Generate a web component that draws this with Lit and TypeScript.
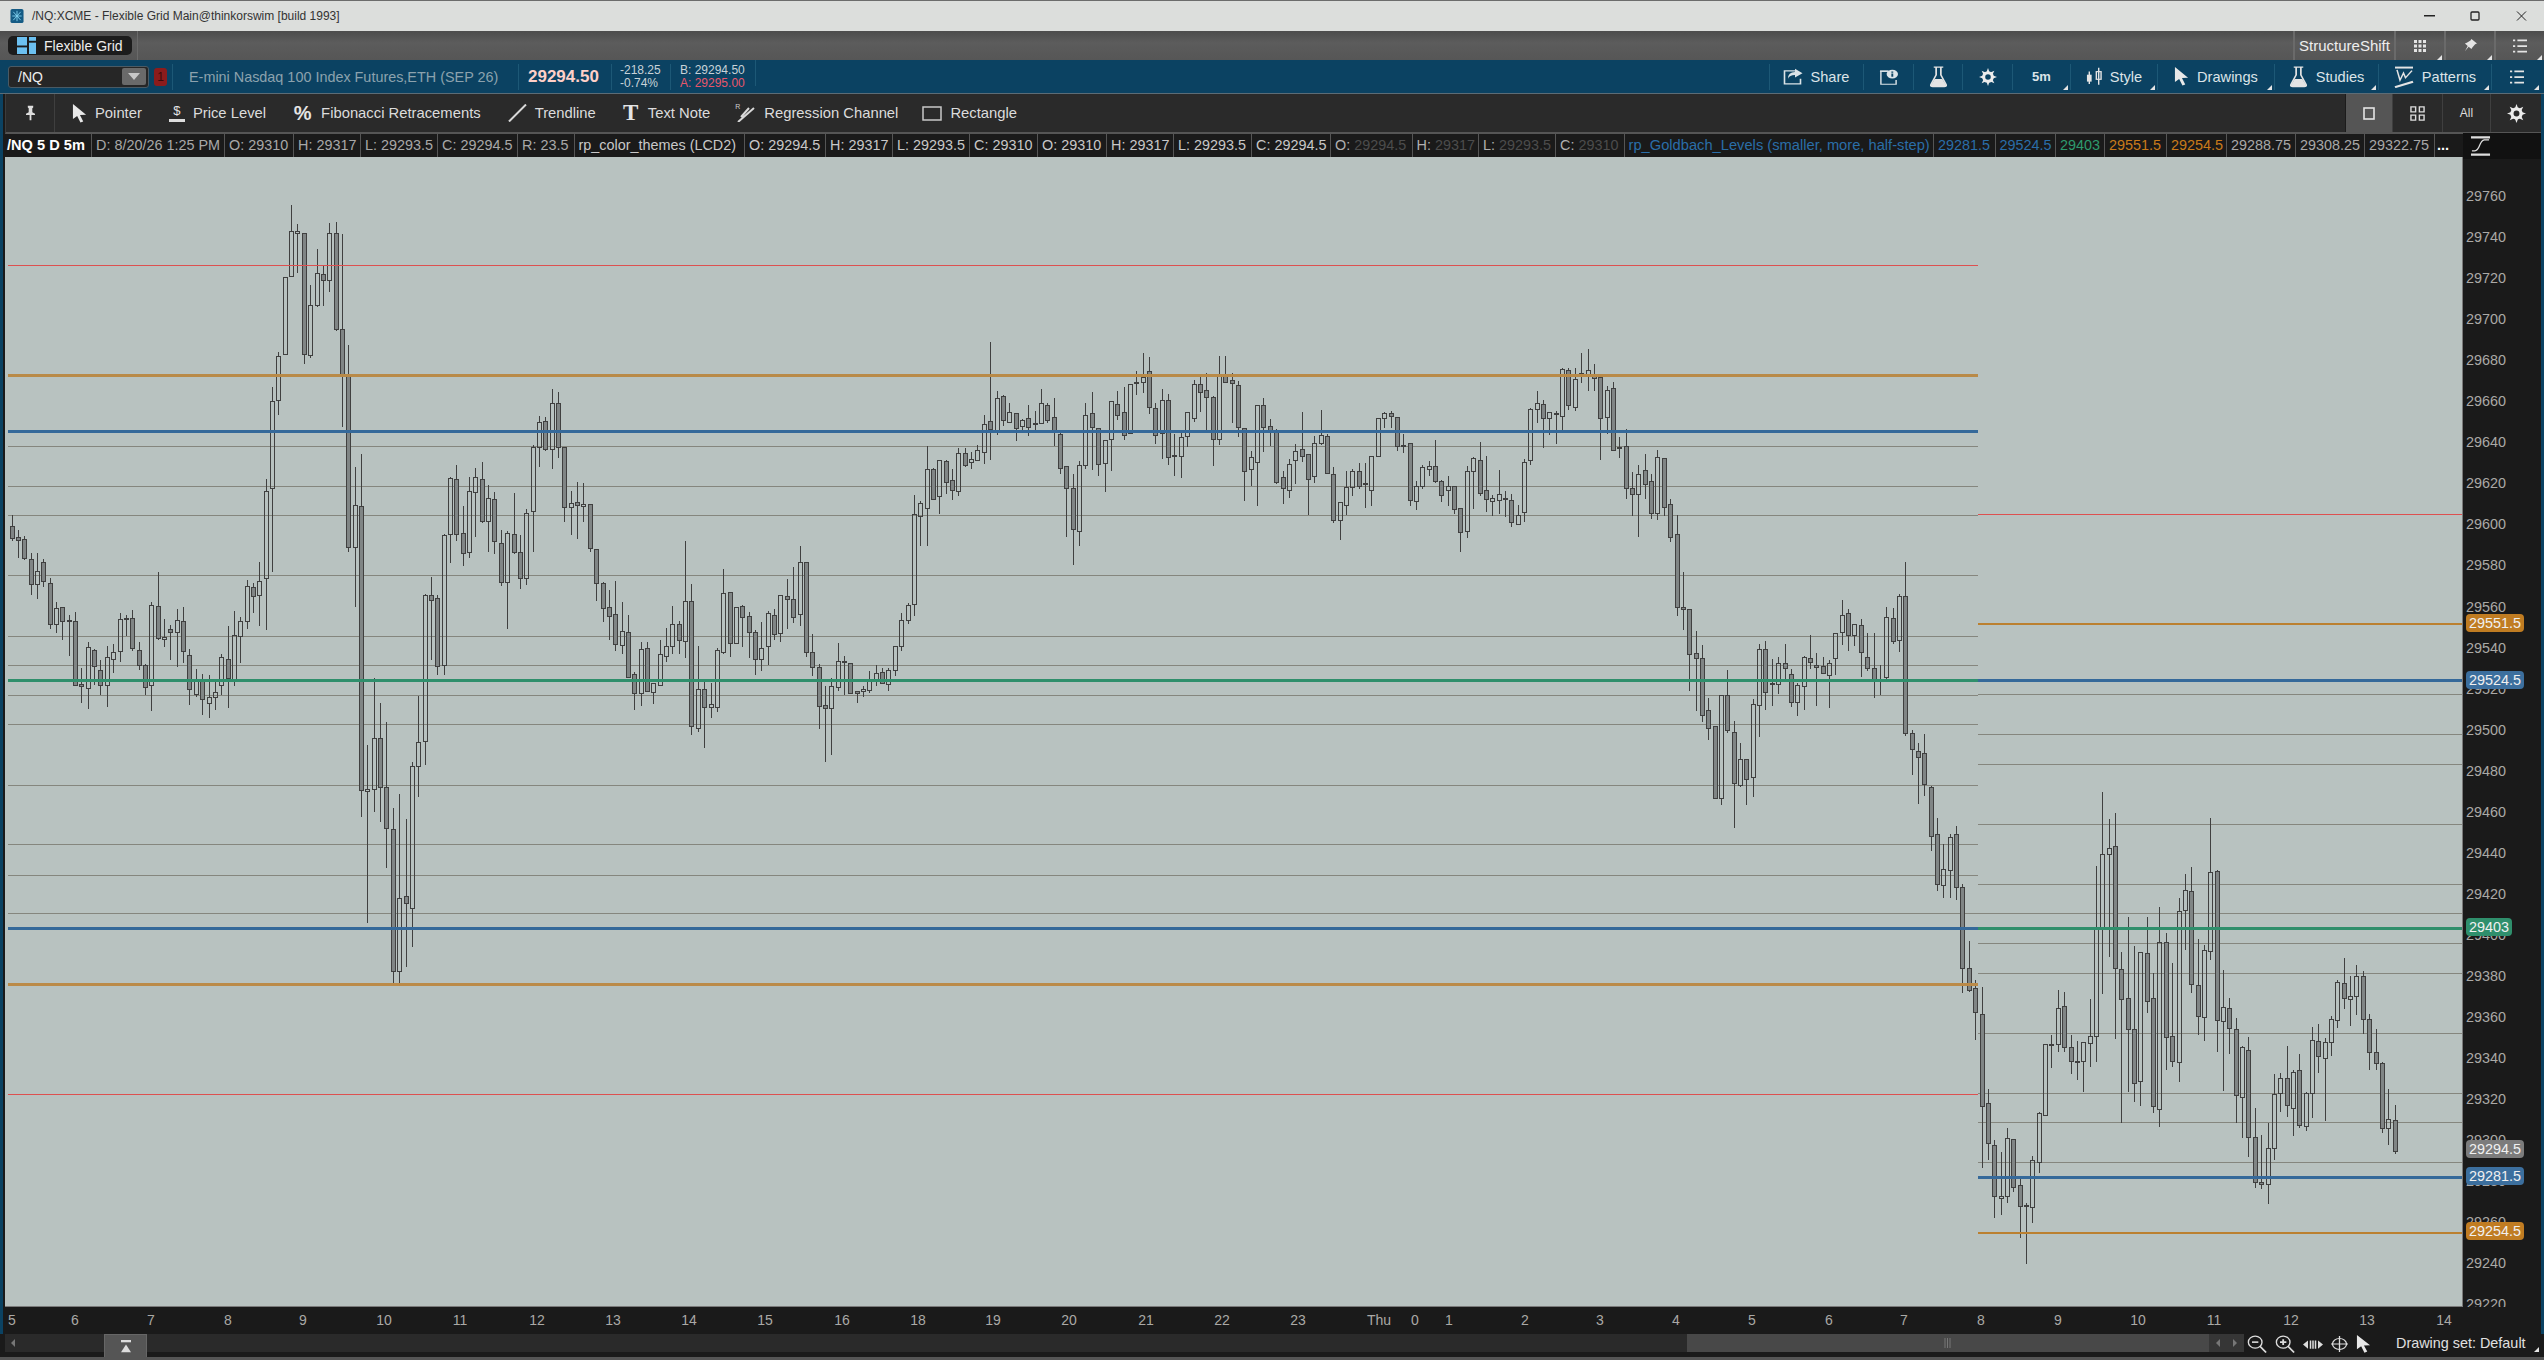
import { LitElement, html, svg, css } from "lit";
import { customElement } from "lit/decorators.js";

// bars read off the reference, as "wickTop bodyTop bodyBottom wickBottom filled", grouped by
// the y origin and scale they were measured with. Bars are evenly spaced along the x axis.
const BAR_GROUPS: { y0: number; s: number; rows: string }[] = [
  {
    y0: 190, s: 1.912,
    rows: `620 642 666 670 1;648 663 670 702 1;660 668 703 706 1;692 706 754 773 1;692 728 754 780 0;704 712 747 758 1;740 751 829 838 1;786 800 829 845 0;797 798 825 858 1;810 823 825 890 1;805 825 946 946 1;912 944 948 978 1;863 873 953 991 0;876 879 911 944 1;897 917 946 964 1;870 892 947 986 0;867 884 896 921 0;806 821 882 900 0;810 818 821 851 0;801 818 875 880 1;863 879 908 915 1;905 908 951 964 1;785 793 946 995 0;728 796 856 858 1;818 854 858 872 0;830 840 846 896 1;800 823 846 911 0;796 825 882 902 1;875 890 955 982 1;914 936 963 968 0;924 935 973 1001 1;926 970 980 1007 0;934 959 970 993 0;886 892 947 964 0;832 896 934 988 1;803 850 935 947 0;815 825 853 902 0;744 758 825 838 0;750 760 777 806 1;709 747 775 832 0;551 576 742 840 0;374 403 570 728 0;308 317 401 428 0;165 167 314 314 0;26 79 165 165 0;64 79 83 156 0;81 82 313 330 1;180 219 315 320 0;111 158 219 222 0;144 160 173 220 1;61 83 173 193 0;59 83 265 267 1;83 265 354 452 1;294 354 682 690 1;528 603 682 796 0;502 605 1148 1196 1;1060 1146 1150 1400 0;932 1047 1146 1188 0;978 1047 1141 1207 1;1015 1141 1219 1295 1;1180 1221 1493 1514 1;1153 1353 1494 1518 0;1201 1349 1364 1483 1;1091 1102 1372 1445 0;965 1055 1102 1158 0;771 775 1053 1098 0;738 775 783 897 1;772 781 911 926 1;655 659 909 926 0;546 550 657 711 0;524 552 657 669 1;602 655 695 717 1;547 575 693 701 0;529 548 578 662 0;518 552 632 634 1;562 588 632 690 0;576 590 672 694 1;648 674 749 756 1;650 655 749 838 0;577 657 693 695 1;658 693 741 761 1;608 617 741 754 0;486 491 613 691 0;431 443 491 528 0;433 441 496 498 1;378 408 496 531 0;384 408 491 510 1;489 491 607 632 1;574 598 607 658 0;557 596 603 665 1;559 601 605 632 0;598 601 684 691 1;686 686 752 784 1;748 752 800 825 1;762 798 814 858 1;746 810 869 880 1`,
  },
  {
    y0: 320, s: 3,
    rows: `843 934 974 1000 0;882 937 1070 1072 1;1052 1063 1118 1167 1;964 988 1118 1155 0;964 985 1112 1114 1;1085 1090 1115 1148 0;957 1003 1094 1094 0;921 979 1007 1022 0;855 913 977 999 0;900 913 959 998 1;660 844 962 1010 0;789 844 1219 1241 1;975 1108 1223 1232 0;1080 1108 1162 1280 1;1085 1153 1160 1190 0;981 991 1160 1172 0;744 820 995 998 0;813 817 970 1007 1;860 862 968 970 0;853 859 892 977 1;873 889 935 1010 1;927 937 1016 1061 1;903 985 1016 1049 0;870 880 977 1032 0;865 885 941 957 1;822 826 938 963 0;773 829 838 924 1;738 838 890 906 1;675 727 881 915 0;727 727 997 1007 1;939 997 1042 1065 1;1030 1042 1157 1224 1;1095 1156 1163 1322 1;1071 1099 1163 1302 0;966 1024 1100 1110 0;1006 1022 1025 1122 1;1028 1030 1118 1118 1;1114 1114 1118 1146 1;1096 1108 1114 1128 0;1050 1076 1110 1116 0;1033 1060 1082 1095 0;1041 1057 1088 1090 1;1040 1051 1091 1110 0;975 979 1051 1065 0;877 901 977 990 0;847 856 899 908 0;522 583 853 885 0;541 550 589 674 0;376 448 563 674 0;441 448 536 536 1;418 419 527 578 0;418 424 485 518 1;445 481 509 537 1;380 400 512 525 0;381 400 434 438 1;393 418 425 444 0;372 391 419 419 0;282 313 395 429 0;63 304 326 417 1;210 233 335 342 0;222 229 299 315 1;246 277 305 305 0;275 280 323 360 1;295 301 318 330 0;252 295 320 345 1;270 308 310 335 1;204 250 308 310 0;247 256 301 305 1;231 292 335 375 1;328 343 443 459 1;439 439 505 648 1;460 505 626 731 1;420 436 634 674 0;246 286 434 443 0;213 280 320 447 1;325 325 431 465 1;358 361 428 513 0;243 244 358 449 0;210 253 284 296 1;197 277 344 357 1;188 193 340 340 0;150 187 189 222 1;97 172 185 215 0;108 154 260 279 1;247 265 344 369 1;205 241 340 413 0;219 241 412 432 1;338 404 406 464 1;327 352 409 470 0;273 277 349 378 0;178 193 293 303 0;158 193 215 273 1;156 211 230 330 1;226 232 356 435 1;105 163 358 372 0;105 163 185 185 1;156 181 190 305 1;180 196 320 348 1`,
  },
  {
    y0: 320, s: 2.529,
    rows: `274 274 381 455 1;330 347 376 417 0;216 216 358 468 0;195 216 270 331 1;249 267 282 316 1;272 282 409 412 1;380 398 424 463 1;350 363 431 447 0;310 332 353 412 0;230 325 343 357 1;340 340 401 490 1;292 310 394 410 0;224 292 311 314 0;287 294 386 388 1;370 390 505 512 1;460 461 505 553 0;380 423 467 491 0;375 383 423 442 0;358 383 421 424 1;358 411 414 472 1;342 345 429 468 0;245 249 343 343 0;230 234 249 270 0;228 234 242 270 1;245 246 319 329 1;287 317 319 334 1;312 312 454 467 1;405 419 457 477 0;365 373 419 425 0;354 370 376 392 0;301 368 408 410 1;402 406 442 458 1;392 421 431 468 0;420 421 477 488 1;476 476 535 584 1;367 383 533 549 0;345 350 381 475 0;307 355 437 443 1;341 431 452 482 1;440 451 457 494 0;377 439 454 487 0;430 449 451 495 1;438 454 510 521 1;465 492 515 517 0;350 358 485 508 0;221 224 353 363 0;176 209 224 258 0;200 213 247 320 1;229 232 247 288 0;228 235 237 311 1;120 125 242 277 0;120 127 216 225 1;120 150 219 228 0;80 135 137 158 0;72 127 138 178 0;110 136 146 178 1;143 143 249 352 1;165 176 245 287 0;155 173 328 328 1;293 322 323 346 1;272 318 424 450 1;382 426 439 494 1;365 390 439 546 0;336 380 414 450 1;388 406 487 501 1;326 347 487 503 0;350 350 472 494 1;449 466 548 558 1;491 542 727 746 1;635 727 730 781 1;732 732 844 936 1;784 841 856 986 1;820 856 998 1015 1;953 987 1031 1060 1;1028 1028 1208 1208 1;949 949 1208 1224 0;883 948 1036 1042 1;1012 1043 1172 1281 1;1067 1111 1175 1179 0;1111 1111 1162 1224 1;956 970 1155 1204 0;818 833 973 1051 0;810 833 940 984 1;855 919 921 974 0;851 868 920 943 0;817 867 879 910 1;880 896 965 975 1;915 922 965 998 0;848 852 925 985 0;795 856 864 880 1;840 872 878 974 1;851 874 892 894 1;857 868 897 979 0;790 791 856 895 0;706 745 788 820 0;728 740 796 835 1;767 770 796 822 0`,
  },
  {
    y0: 540, s: 2.119,
    rows: `165 180 238 288 1;196 247 272 275 1;195 272 298 333 1;263 296 298 327 0;140 164 290 295 0;141 166 215 219 1;112 118 211 236 0;44 118 408 413 1;400 408 442 495 1;427 447 459 558 1;409 452 518 540 1;520 524 628 657 1;586 624 728 742 1;642 698 730 756 0;621 630 700 756 0;604 624 735 761 1;727 736 906 958 1;848 906 953 955 1;930 950 1001 1058 1;945 1005 1200 1329 1;1162 1192 1277 1312 1;1270 1281 1391 1435 1;1295 1391 1395 1428 0;1243 1268 1391 1403 0;1267 1270 1372 1379 1;1346 1366 1411 1478 1;1402 1409 1411 1531 1;1303 1313 1414 1445 0;1209 1215 1317 1340 0;1065 1069 1219 1219 0;1047 1069 1071 1117 1;951 991 1068 1083 0;956 988 1074 1082 1;1047 1075 1105 1129 1;1060 1103 1105 1143 1;1063 1063 1105 1168 0;970 1050 1065 1115 0;689 825 1050 1104 0;532 666 820 960 0;589 652 666 881 0;576 649 906 1055 1;871 908 972 1233 1;797 971 1037 1168 1;858 1037 1150 1188 1;873 874 1147 1198 0;797 876 976 1000 1;915 971 1200 1212 1;776 851 1205 1241 0;831 851 1053 1122 1;894 1050 1105 1115 1;756 787 1107 1146 0;706 742 783 866 0;691 743 940 958 1;843 942 1008 1046 1;857 868 1010 1059 0;588 704 870 888 0;698 702 1018 1082 1;909 989 1020 1165 0;968 991 1035 1088 1;1011 1037 1177 1233 1;1071 1075 1181 1266 0;1051 1080 1266 1306 1;1202 1266 1361 1371 1;1259 1361 1364 1373 1;1234 1289 1364 1405 0;1130 1174 1289 1312 0;1127 1141 1172 1210 0;1070 1141 1198 1221 1;1120 1128 1203 1260 0;1087 1124 1239 1244 1;1167 1172 1241 1250 0;1030 1060 1171 1223 0;1023 1061 1094 1127 1;1054 1063 1097 1229 0;1006 1014 1063 1092 0;930 936 1018 1033 0;884 938 971 992 1;922 967 972 1027 0;898 923 967 1005 0;912 923 1016 1045 1;1003 1014 1084 1120 1;1035 1084 1109 1120 1;1103 1109 1247 1254 1;1161 1226 1245 1280 0;1195 1229 1294 1299 1`,
  },
];

const SPLIT_X = 1978;
const LEFT_X = 8;
const RIGHT_X = 2462;

const GRAY_LEFT = [446, 486, 515, 575, 636, 665.5, 695, 724.5, 785, 844, 875];
const GRAY_RIGHT = [694, 734.5, 764.5, 824.5, 884.5, 943.5, 973, 1033.5, 1093.5, 1122, 1162.5];

const LEVELS = [
  { y: 265, c: "#dd5050", w: 1, left: true },
  { y: 375.5, c: "#b98a48", w: 3, left: true },
  { y: 431.5, c: "#35699a", w: 3, left: true },
  { y: 680.5, c: "#2f8f6c", w: 3, left: true },
  { y: 928.5, c: "#35699a", w: 3, left: true },
  { y: 984.5, c: "#bb8a48", w: 3, left: true },
  { y: 1094.5, c: "#dd5050", w: 1, left: true },
  { y: 514.5, c: "#dd5050", w: 1, left: false },
  { y: 624, c: "#bb8030", w: 2, left: false },
  { y: 680.5, c: "#35699a", w: 3, left: false },
  { y: 928.5, c: "#2f8f6c", w: 3, left: false },
  { y: 1177.5, c: "#35699a", w: 3, left: false },
  { y: 1233, c: "#bb8030", w: 2, left: false },
];

const priceY = (p: number) => 1017 - (p - 29360) * 2.0525;
const PRICE_TICKS: number[] = [];
for (let p = 29760; p >= 29220; p -= 20) PRICE_TICKS.push(p);

const BADGES = [
  { t: "29551.5", y: 623, c: "#c07c22" },
  { t: "29524.5", y: 679.5, c: "#3c6f9e" },
  { t: "29403", y: 927, c: "#2f8f6c" },
  { t: "29294.5", y: 1149, c: "#7c7c7c" },
  { t: "29281.5", y: 1176, c: "#3c6f9e" },
  { t: "29254.5", y: 1231, c: "#c07c22" },
];

const TIME_LABELS: [string, number][] = [
  ["5", 12], ["6", 75], ["7", 151], ["8", 228], ["9", 303], ["10", 384], ["11", 460], ["12", 537],
  ["13", 613], ["14", 689], ["15", 765], ["16", 842], ["18", 918], ["19", 993], ["20", 1069],
  ["21", 1146], ["22", 1222], ["23", 1298], ["Thu", 1379], ["0", 1415], ["1", 1449], ["2", 1525],
  ["3", 1600], ["4", 1676], ["5", 1752], ["6", 1829], ["7", 1904], ["8", 1981], ["9", 2058],
  ["10", 2138], ["11", 2214], ["12", 2291], ["13", 2367], ["14", 2444],
];

// info strip cells: label, value, right edge on the page, colour class
const INFO: [string, string, number, string][] = [
  ["/NQ 5 D 5m", "", 92, "head"],
  ["D: 8/20/26 1:25 PM", "", 225, "mid"],
  ["O: 29310", "", 294, "mid"],
  ["H: 29317", "", 361, "mid"],
  ["L: 29293.5", "", 438, "mid"],
  ["C: 29294.5", "", 518, "mid"],
  ["R: 23.5", "", 574.5, "mid"],
  ["rp_color_themes (LCD2)", "", 745, "lite"],
  ["O: ", "29294.5", 826, "lite"],
  ["H: ", "29317", 893, "lite"],
  ["L: ", "29293.5", 970, "lite"],
  ["C: ", "29310", 1038, "lite"],
  ["O: ", "29310", 1107, "lite"],
  ["H: ", "29317", 1174, "lite"],
  ["L: ", "29293.5", 1252, "lite"],
  ["C: ", "29294.5", 1331, "lite"],
  ["O: ", "29294.5", 1412.5, "dim"],
  ["H: ", "29317", 1479, "dim"],
  ["L: ", "29293.5", 1556, "dim"],
  ["C: ", "29310", 1624.5, "dim"],
  ["rp_Goldbach_Levels (smaller, more, half-step)", "", 1934, "blue long"],
  ["29281.5", "", 1995.5, "blue"],
  ["29524.5", "", 2056, "blue"],
  ["29403", "", 2105, "green"],
  ["29551.5", "", 2167, "orange"],
  ["29254.5", "", 2227, "orange"],
  ["29288.75", "", 2296, "mid"],
  ["29308.25", "", 2365, "mid"],
  ["29322.75", "", 2435, "mid"],
  ["...", "", 2463, "head"],
];

const gear = (size: number, color = "#ececec") => {
  const teeth = [0, 45, 90, 135, 180, 225, 270, 315];
  return html`<svg width=${size} height=${size} viewBox="0 0 20 20">
    ${teeth.map((a) => svg`<path d="M10 0l2.200 6H7.800z" fill=${color} transform="rotate(${a} 10 10)"></path>`)}
    <circle cx="10" cy="10" r="4.800" fill="none" stroke=${color} stroke-width="3.400"></circle>
  </svg>`;
};

const flask = (w: number, h: number) => html`<svg width=${w} height=${h} viewBox="0 0 20 32" preserveAspectRatio="none">
  <path d="M5 1.500h10M7.500 2v11L2 27q-.6 3 2 3h12q2.600 0 2-3L12.500 13V2" fill="none" stroke="#e4e4e4" stroke-width="1.800"></path>
  <path d="M6 19h8l4 9q0 1.500-1.500 1.500h-13Q2 29.500 2 28z" fill="#e4e4e4"></path>
</svg>`;

const arrow = (w: number, h: number, color = "#e8e8e8") => html`<svg width=${w} height=${h} viewBox="0 0 16 24" preserveAspectRatio="none">
  <path d="M1 0l14 13.500-6.500.5 3.500 8-3 1.500-3.500-8.500L1 19z" fill=${color}></path>
</svg>`;

const listIcon = (w: number, h: number) => html`<svg width=${w} height=${h} viewBox="0 0 16 16">
  <path d="M0 1.500h2.500M5 1.500h11M0 8h2.500M5 8h11M0 14.500h2.500M5 14.500h11" stroke="#e4e4e4" stroke-width="2"></path>
</svg>`;

const TOOLS = [
  { label: "Pointer", w: 27, icon: arrow(15, 19) },
  {
    label: "Price Level", w: 26,
    icon: html`<span class="glyph dollar">$<i></i></span>`,
  },
  {
    label: "Fibonacci Retracements", w: 27,
    icon: html`<span class="glyph pct">%</span>`,
  },
  {
    label: "Trendline", w: 26,
    icon: html`<svg width="19" height="18" viewBox="0 0 19 18"><path d="M1 17.500L18 .5" stroke="#d8d8d8" stroke-width="2"></path></svg>`,
  },
  {
    label: "Text Note", w: 25,
    icon: html`<span class="glyph tee">T</span>`,
  },
  {
    label: "Regression Channel", w: 24,
    icon: html`<span class="reg"><small>R</small><svg width="21" height="18" viewBox="0 0 21 18"><path d="M6 13L14 4M3 18L19 4" stroke="#d8d8d8" stroke-width="2"></path></svg></span>`,
  },
  {
    label: "Rectangle", w: 0,
    icon: html`<svg width="20" height="15" viewBox="0 0 20 15"><rect x="1" y="1" width="18" height="13" fill="none" stroke="#c8c8c8" stroke-width="1.500"></rect></svg>`,
  },
];

const SYM_CELLS = [
  {
    w: 94, label: "Share", corner: false,
    icon: html`<svg width="20" height="17" viewBox="0 0 20 24" preserveAspectRatio="none"><path d="M13 4H1.500v18.500h16V15" fill="none" stroke="#dce4e8" stroke-width="1.600"></path><path d="M12 1l7.500 6.500-7.500 6v-3.500q-5.500 0-7 5 0-9.500 7-9.500z" fill="#dce4e8"></path></svg>`,
  },
  {
    w: 50.5, label: "", corner: false,
    icon: html`<svg width="19" height="16" viewBox="0 0 20 22" preserveAspectRatio="none"><path d="M10 3H2v18h16v-6" fill="none" stroke="#dce4e8" stroke-width="1.500"></path><path d="M1 3h9" stroke="#dce4e8" stroke-width="2"></path><circle cx="14" cy="7" r="6" fill="#dce4e8"></circle><path d="M14 3.500v1.500M14 6.200v4.500" stroke="#0b4262" stroke-width="2"></path></svg>`,
  },
  { w: 49, label: "", corner: false, icon: flask(19, 22) },
  { w: 50, label: "", corner: false, icon: gear(18) },
  { w: 58, label: "", bold: "5m", corner: true, icon: null },
  {
    w: 87, label: "Style", corner: true,
    icon: html`<svg width="16" height="20" viewBox="0 0 17 26" preserveAspectRatio="none"><path d="M3.500 6v16M13.500 1v22" stroke="#e4e4e4" stroke-width="1.500"></path><rect x="1" y="10" width="5" height="9" fill="#e4e4e4"></rect><rect x="11" y="6" width="5" height="10" fill="none" stroke="#e4e4e4" stroke-width="1.500"></rect></svg>`,
  },
  { w: 117, label: "Drawings", corner: true, icon: arrow(15, 19) },
  { w: 104, label: "Studies", corner: true, icon: flask(19, 22) },
  {
    w: 113, label: "Patterns", corner: true,
    icon: html`<svg width="20" height="22" viewBox="0 0 20 28" preserveAspectRatio="none"><path d="M1 2h18" stroke="#e4e4e4" stroke-width="2.500"></path><path d="M3 5l3 13 3.500-9 2 6L18 6" fill="none" stroke="#e4e4e4" stroke-width="1.500"></path><path d="M1 27L19 20" stroke="#e4e4e4" stroke-width="2.500"></path></svg>`,
  },
  { w: 50, label: "", corner: true, icon: listIcon(14, 14) },
];

@customElement("app-root")
export class AppRoot extends LitElement {
  static styles = css`
    :host {
      display: block;
      width: 2544px;
      height: 1360px;
      overflow: hidden;
      font-family: "Liberation Sans", Arial, sans-serif;
    }
    .page {
      position: relative;
      width: 2544px;
      height: 1360px;
      display: flex;
      flex-direction: column;
      background: #1a1a1a;
      color: #ddd;
    }
    .title {
      height: 31px;
      flex: none;
      display: flex;
      align-items: center;
      background: #dcdedc;
      border-top: 1px solid #6c6c6c;
      box-sizing: border-box;
      padding-left: 10px;
      color: #333;
      font-size: 12px;
    }
    .title .text {
      margin-left: 8px;
      flex: 1;
    }
    .winbtn {
      width: 46px;
      display: flex;
      justify-content: center;
    }
    .tabs {
      height: 29px;
      flex: none;
      display: flex;
      align-items: center;
      background: linear-gradient(#4c4c4c, #5c5c5c 40%, #565656);
      padding-left: 8px;
    }
    .tab {
      width: 124px;
      height: 19px;
      box-sizing: border-box;
      background: #1c1c1c;
      border-radius: 5px;
      display: flex;
      align-items: center;
      padding-left: 9px;
      gap: 8px;
      color: #eee;
      font-size: 14px;
    }
    .tabsep {
      width: 1px;
      height: 29px;
      background: #6a6a6a;
      margin-left: 5px;
    }
    .tabright {
      margin-left: auto;
      display: flex;
      height: 29px;
    }
    .tabcell {
      position: relative;
      box-sizing: border-box;
      border-left: 2px solid #6a6a6a;
      display: flex;
      align-items: center;
      justify-content: center;
      color: #eee;
      font-size: 15px;
    }
    .frame {
      flex: 1;
      min-height: 0;
      display: flex;
      flex-direction: column;
      border-left: 3px solid #0b4262;
      border-right: 3px solid #0b4262;
    }
    .sym {
      height: 33px;
      flex: none;
      display: flex;
      align-items: center;
      background: #0b4262;
      border-bottom: 1px solid #5c6c76;
      margin-left: -3px;
      margin-right: -3px;
      padding-right: 3px;
    }
    .select {
      margin-left: 8px;
      width: 141px;
      height: 22px;
      box-sizing: border-box;
      background: #262626;
      border: 1px solid #4a5a64;
      border-radius: 3px;
      display: flex;
      align-items: center;
      justify-content: space-between;
      padding: 0 2px 0 9px;
      color: #eee;
      font-size: 14px;
    }
    .drop {
      width: 24px;
      height: 17px;
      background: #6a6a6a;
      border-radius: 2px;
      display: flex;
      align-items: center;
      justify-content: center;
    }
    .drop i {
      border-left: 6px solid transparent;
      border-right: 6px solid transparent;
      border-top: 7px solid #c8c8c8;
    }
    .badge1 {
      position: relative;
      margin-left: 5px;
      width: 13px;
      height: 18px;
      background: #8c1c1c;
      border-radius: 3px;
      color: #3a0a0a;
      font-size: 12px;
      text-align: center;
      line-height: 18px;
    }
    .symcell {
      height: 26px;
      box-sizing: border-box;
      border-left: 1px solid #1d5876;
      display: flex;
      align-items: center;
      position: relative;
      flex: none;
    }
    .desc {
      margin-left: 5px;
      width: 346px;
      padding-left: 16px;
      color: #8ca2ae;
      font-size: 14.4px;
    }
    .last {
      width: 93px;
      padding-left: 9px;
      color: #ffd0c8;
      font-size: 17px;
      font-weight: 700;
    }
    .pair {
      flex-direction: column;
      align-items: flex-start;
      justify-content: center;
      font-size: 12px;
      line-height: 13px;
      color: #c8d2d8;
    }
    .chg {
      width: 59px;
      padding-left: 8px;
    }
    .ba {
      width: 85px;
      padding-left: 9px;
    }
    .ask {
      color: #e8566a;
    }
    .symspacer {
      flex: 1;
      align-self: stretch;
    }
    .right {
      justify-content: center;
      gap: 8px;
      color: #dce4e8;
      font-size: 14.6px;
    }
    .right b {
      font-size: 13px;
    }
    .corner {
      position: absolute;
      right: 2px;
      bottom: 0;
      border-left: 5px solid transparent;
      border-bottom: 5px solid #e4e4e4;
    }
    .tools {
      height: 38px;
      flex: none;
      display: flex;
      align-items: center;
      background: #2a2a2a;
      margin-left: 2px;
      border-left: 1px solid #3c3c3c;
      box-sizing: content-box;
      font-size: 14.8px;
      color: #dcdcdc;
      border-bottom: 2px solid #555;
    }
    .pin {
      width: 49px;
      height: 38px;
      flex: none;
      box-sizing: border-box;
      border-right: 1px solid #3f3f3f;
      display: flex;
      align-items: center;
      justify-content: center;
      margin-right: 17px;
    }
    .tool {
      display: flex;
      align-items: center;
      flex: none;
      gap: 8px;
      white-space: nowrap;
    }
    .glyph {
      display: block;
      text-align: center;
      color: #e4e4e4;
      font-weight: 700;
    }
    .dollar {
      position: relative;
      width: 16px;
      height: 20px;
      line-height: 16px;
      font-size: 13px;
      font-weight: 400;
    }
    .dollar i {
      position: absolute;
      left: 0;
      right: 0;
      bottom: 1px;
      height: 3px;
      background: #ddd;
    }
    .pct {
      width: 21px;
      line-height: 24px;
      font-size: 20px;
    }
    .tee {
      width: 18px;
      line-height: 26px;
      font-size: 23px;
      font-family: "Liberation Serif", serif;
    }
    .reg {
      position: relative;
      display: block;
      width: 21px;
      height: 18px;
    }
    .reg svg {
      display: block;
    }
    .reg small {
      position: absolute;
      left: 0;
      top: -2px;
      font-size: 7px;
      line-height: 9px;
      color: #ccc;
    }
    .toolright {
      margin-left: auto;
      display: flex;
      height: 38px;
    }
    .toolbtn {
      box-sizing: border-box;
      border-left: 1px solid #3f3f3f;
      display: flex;
      align-items: center;
      justify-content: center;
      font-size: 12px;
      color: #ddd;
    }
    .toolbtn.on {
      width: 47px;
      background: #555;
      border-left: 1px solid #1c1c1c;
    }
    .toolbtn.grid {
      width: 50px;
    }
    .toolbtn.all {
      width: 48px;
    }
    .toolbtn.cog {
      width: 51px;
    }
    .info {
      height: 23px;
      flex: none;
      display: flex;
      align-items: stretch;
      background: #1a1a1a;
      margin-left: 2px;
      font-size: 14.4px;
    }
    .cell {
      flex: none;
      box-sizing: border-box;
      border-right: 1px solid #555;
      padding-left: 4px;
      white-space: nowrap;
      overflow: hidden;
      line-height: 23px;
    }
    .cell.head {
      color: #fff;
      font-weight: 700;
      font-size: 14.6px;
      padding-left: 2px;
    }
    .cell.mid {
      color: #a8a8a8;
    }
    .cell.lite {
      color: #c8c8c8;
    }
    .cell.dim {
      color: #b0b0b0;
    }
    .cell.dim span {
      color: #4c4c4c;
    }
    .cell.blue {
      color: #2a6ea8;
    }
    .cell.long {
      font-size: 14.7px;
    }
    .cell.green {
      color: #2e9a6e;
    }
    .cell.orange {
      color: #c87a1a;
    }
    .cell.last-cell {
      border-right: 0;
    }
    .main {
      height: 1150px;
      flex: none;
      display: flex;
      padding-left: 2px;
    }
    .plot {
      flex: none;
      width: 2458px;
      height: 1150px;
      box-sizing: border-box;
      background: #b8c2c0;
      border-right: 1px solid #7a7a7a;
      border-bottom: 1px solid #7a7a7a;
    }
    .plot svg {
      display: block;
    }
    .axis {
      position: relative;
      flex: 1;
      overflow: hidden;
      color: #aaa9a6;
      font-size: 14.4px;
    }
    .tick {
      position: absolute;
      left: 3px;
      line-height: 16px;
      margin-top: -8px;
    }
    .flag {
      position: absolute;
      left: 3px;
      height: 18px;
      margin-top: -9px;
      line-height: 18px;
      padding: 0 3px;
      border-radius: 4px;
      color: #f0f0f0;
      box-sizing: border-box;
    }
    .curve {
      position: absolute;
      left: 2463px;
      top: 133px;
      width: 78px;
      height: 26px;
      box-sizing: border-box;
      padding-left: 7px;
      background: #111;
      display: flex;
      align-items: center;
    }
    .times {
      position: relative;
      height: 27px;
      flex: none;
      color: #aaa9a6;
      font-size: 14px;
      line-height: 26px;
    }
    .times span {
      position: absolute;
      top: 0;
      transform: translateX(-50%);
    }
    .scroll {
      flex: 1;
      display: flex;
      align-items: flex-start;
      background: #1a1a1a;
      border-bottom: 3px solid #555;
      margin-left: -3px;
      margin-right: -3px;
      padding: 0 3px;
    }
    .track {
      height: 18px;
      background: #2a2a2a;
      flex: none;
      display: flex;
      align-items: center;
    }
    .leftpart {
      margin-left: 2px;
      width: 99px;
      padding-left: 6px;
      box-sizing: border-box;
    }
    .leftpart i {
      border-top: 4px solid transparent;
      border-bottom: 4px solid transparent;
      border-right: 4px solid #777;
    }
    .rail {
      width: 1540px;
    }
    .dock {
      width: 43px;
      height: 23px;
      flex: none;
      background: #555;
      box-sizing: border-box;
      border: 1px solid #666;
      border-bottom: 0;
      display: flex;
      align-items: center;
      justify-content: center;
    }
    .thumb {
      width: 522px;
      height: 18px;
      flex: none;
      background: #484848;
      display: flex;
      align-items: center;
      justify-content: center;
    }
    .ends {
      width: 35px;
      background: #363636;
      justify-content: space-around;
    }
    .ends i {
      border-top: 4px solid transparent;
      border-bottom: 4px solid transparent;
    }
    .tri-l {
      border-right: 4px solid #777;
    }
    .tri-r {
      border-left: 4px solid #777;
    }
    .zoomers {
      width: 152px;
      height: 20px;
      flex: none;
      display: flex;
      align-items: center;
      gap: 8px;
      padding-left: 3px;
      box-sizing: border-box;
    }
    .drawset {
      position: relative;
      flex: 1;
      height: 23px;
      line-height: 19px;
      font-size: 14.4px;
      color: #e0e0e0;
      white-space: nowrap;
    }
  `;

  private chart() {
    const wicks: string[] = [];
    const solid: string[] = [];
    const hollow: string[] = [];
    let i = 0;
    for (const group of BAR_GROUPS) {
      for (const row of group.rows.split(";")) {
        const [wt, bt, bb, wb, filled] = row.split(" ").map(Number);
        const cx = Math.round(11.5 + 6.355 * i) + 0.5;
        const py = (v: number) => Math.round(group.y0 + v / group.s) + 0.5;
        const t = py(bt);
        const b = Math.max(py(bb), t + 1);
        if (py(wt) < t) wicks.push(`M${cx} ${py(wt)}V${t}`);
        if (py(wb) > b) wicks.push(`M${cx} ${b}V${py(wb)}`);
        const body = `M${cx - 2} ${t}h4V${b}h-4z`;
        (filled ? solid : hollow).push(body);
        i++;
      }
    }
    const line = (y: number, x1: number, x2: number, c: string, w: number) =>
      svg`<line x1=${x1} x2=${x2} y1=${y} y2=${y} stroke=${c} stroke-width=${w}></line>`;
    return html`<svg width="2457" height="1149" viewBox="5 157 2457 1149" shape-rendering="crispEdges">
      ${GRAY_LEFT.map((y) => line(y, LEFT_X, SPLIT_X, "#85867e", 1))}
      ${GRAY_RIGHT.map((y) => line(y, SPLIT_X, RIGHT_X, "#85867e", 1))}
      ${line(913.5, LEFT_X, RIGHT_X, "#85867e", 1)}
      <path d=${wicks.join("")} stroke="#404040" fill="none"></path>
      <path d=${solid.join("")} stroke="#404040" fill="#808585"></path>
      <path d=${hollow.join("")} stroke="#404040" fill="none"></path>
      ${LEVELS.map((l) => line(l.y, l.left ? LEFT_X : SPLIT_X, l.left ? SPLIT_X : RIGHT_X, l.c, l.w))}
    </svg>`;
  }

  private infoCells() {
    let prev = 5;
    return INFO.map(([a, b, edge, cls], i) => {
      const w = edge - prev;
      prev = edge;
      return html`<div class="cell ${cls} ${i === INFO.length - 1 ? "last-cell" : ""}" style="width:${w}px">${a}<span>${b}</span></div>`;
    });
  }

  render() {
    return html`<div class="page">
      <div class="title">
        <svg width="14" height="14" viewBox="0 0 14 15">
          <rect width="14" height="15" rx="2" fill="#155b84"></rect>
          <path d="M7 2v11M2 7.500h10M3 3l8 9M11 3l-8 9" stroke="#7fd0ee" stroke-width="1"></path>
        </svg>
        <div class="text">/NQ:XCME - Flexible Grid Main@thinkorswim [build 1993]</div>
        <div class="winbtn"><svg width="11" height="2"><rect width="11" height="1.500" fill="#222"></rect></svg></div>
        <div class="winbtn"><svg width="10" height="10"><rect x="1" y="1" width="8" height="8" rx="1" fill="none" stroke="#222" stroke-width="1.300"></rect></svg></div>
        <div class="winbtn"><svg width="11" height="10"><path d="M1 .5l9 9M10 .5l-9 9" stroke="#222" stroke-width="1"></path></svg></div>
      </div>

      <div class="tabs">
        <div class="tab">
          <svg width="19" height="17" viewBox="0 0 19 18" preserveAspectRatio="none">
            <rect x="0" y="0" width="10" height="9" fill="#6cc0f0"></rect>
            <rect x="0" y="11" width="10" height="7" fill="#6cc0f0"></rect>
            <rect x="12" y="0" width="7" height="4" fill="#6cc0f0"></rect>
            <rect x="12" y="6" width="7" height="12" fill="#6cc0f0"></rect>
          </svg>
          Flexible Grid
        </div>
        <div class="tabsep"></div>
        <div class="tabright">
          <div class="tabcell" style="width:101px">StructureShift</div>
          <div class="tabcell" style="width:50px">
            <svg width="12" height="12" viewBox="0 0 12 12"><path d="M0 1.500h12M0 6h12M0 10.500h12" stroke="#e4e4e4" stroke-width="3" stroke-dasharray="3 1.500"></path></svg>
            <span class="corner"></span>
          </div>
          <div class="tabcell" style="width:50px">
            <svg width="13" height="13" viewBox="0 0 14 17" preserveAspectRatio="none"><path d="M8 0l6 6-2 1-3 4-1 2-3-3-4 6 3-7-3-3 2-1 4-3z" fill="#e4e4e4"></path></svg>
            <span class="corner"></span>
          </div>
          <div class="tabcell" style="width:50px">
            ${listIcon(14, 14)}
            <span class="corner"></span>
          </div>
        </div>
      </div>

      <div class="frame">
        <div class="sym">
          <div class="select">/NQ<span class="drop"><i></i></span></div>
          <div class="badge1">1</div>
          <div class="symcell desc">E-mini Nasdaq 100 Index Futures,ETH (SEP 26)</div>
          <div class="symcell last">29294.50</div>
          <div class="symcell pair chg"><div>-218.25</div><div>-0.74%</div></div>
          <div class="symcell pair ba"><div>B: 29294.50</div><div class="ask">A: 29295.00</div></div>
          <div class="symcell symspacer"></div>
          ${SYM_CELLS.map(
            (c) => html`<div class="symcell right" style="width:${c.w}px">
              ${c.icon}${c.label ? html`<span>${c.label}</span>` : ""}${c.bold ? html`<b>${c.bold}</b>` : ""}
              ${c.corner ? html`<span class="corner"></span>` : ""}
            </div>`
          )}
        </div>

        <div class="tools">
          <div class="pin">
            <svg width="9" height="16" viewBox="0 0 10 20" preserveAspectRatio="none"><path d="M2 1h6v2L7 4v5l3 2v1.500H6V19H4v-6.500H0V11l3-2V4L2 3z" fill="#ddd"></path></svg>
          </div>
          ${TOOLS.map(
            (t) => html`<div class="tool" style="margin-right:${t.w}px">${t.icon}<span>${t.label}</span></div>`
          )}
          <div class="toolright">
            <div class="toolbtn on">
              <svg width="12" height="13"><rect x="1" y="1" width="10" height="11" fill="none" stroke="#e4e4e4" stroke-width="1.600"></rect></svg>
            </div>
            <div class="toolbtn grid">
              <svg width="15" height="15" viewBox="0 0 16 18" preserveAspectRatio="none"><path d="M1 1h5v6H1zM10 1h5v6h-5zM1 11h5v6H1zM10 11h5v6h-5z" fill="none" stroke="#ddd" stroke-width="1.500"></path></svg>
            </div>
            <div class="toolbtn all">All</div>
            <div class="toolbtn cog">${gear(19)}</div>
          </div>
        </div>

        <div class="info">${this.infoCells()}</div>

        <div class="main">
          <div class="plot">${this.chart()}</div>
          <div class="axis">
            ${PRICE_TICKS.map((p) => html`<div class="tick" style="top:${priceY(p) - 157}px">${p}</div>`)}
            ${BADGES.map(
              (b) => html`<div class="flag" style="top:${b.y - 157}px;background:${b.c}">${b.t}</div>`
            )}
          </div>
        </div>

        <div class="times">
          ${TIME_LABELS.map(([t, x]) => html`<span style="left:${x - 3}px">${t}</span>`)}
        </div>

        <div class="scroll">
          <div class="track leftpart"><i></i></div>
          <div class="dock">
            <svg width="12" height="13" viewBox="0 0 12 17" preserveAspectRatio="none"><rect x="1" y="0" width="10" height="3" fill="#ddd"></rect><path d="M6 6l5 10H1z" fill="#ddd"></path></svg>
          </div>
          <div class="track rail"></div>
          <div class="thumb">
            <svg width="8" height="10"><path d="M1 0v10M3.500 0v10M6 0v10" stroke="#777" stroke-width="1"></path></svg>
          </div>
          <div class="track ends"><i class="tri-l"></i><i class="tri-r"></i></div>
          <div class="zoomers">
            <svg width="20" height="19" viewBox="0 0 22 24" preserveAspectRatio="none"><circle cx="9" cy="9" r="7.500" fill="none" stroke="#ddd" stroke-width="1.500"></circle><path d="M5.500 9h7" stroke="#ddd" stroke-width="2"></path><path d="M14 14l7 8" stroke="#ddd" stroke-width="2"></path></svg>
            <svg width="20" height="19" viewBox="0 0 22 24" preserveAspectRatio="none"><circle cx="9" cy="9" r="7.500" fill="none" stroke="#ddd" stroke-width="1.500"></circle><path d="M5.500 9h7M9 5.500v7" stroke="#ddd" stroke-width="2"></path><path d="M14 14l7 8" stroke="#ddd" stroke-width="2"></path></svg>
            <svg width="20" height="11" viewBox="0 0 20 16" preserveAspectRatio="none"><path d="M0 8l5-6v12zM20 8l-5-6v12z" fill="#ddd"></path><path d="M7.500 2v12M10 2v12M12.500 2v12" stroke="#ddd" stroke-width="1.500"></path></svg>
            <svg width="17" height="16" viewBox="0 0 17 20" preserveAspectRatio="none"><circle cx="8.500" cy="10" r="7" fill="none" stroke="#ddd" stroke-width="1.300"></circle><path d="M8.500 0v20M0 10h17" stroke="#ddd" stroke-width="1.300"></path></svg>
            ${arrow(15, 18)}
          </div>
          <div class="drawset">Drawing set: Default<span class="corner" style="right:2px;bottom:5px"></span></div>
        </div>
      </div>

      <div class="curve">
        <svg width="21" height="20" viewBox="0 0 22 21"><path d="M1 1.500h20M1 19.500h20" stroke="#ddd" stroke-width="2.500"></path><path d="M2 15.500h3q3 0 5-5.500t5-6h5" fill="none" stroke="#ddd" stroke-width="1.300"></path></svg>
      </div>
    </div>`;
  }
}
